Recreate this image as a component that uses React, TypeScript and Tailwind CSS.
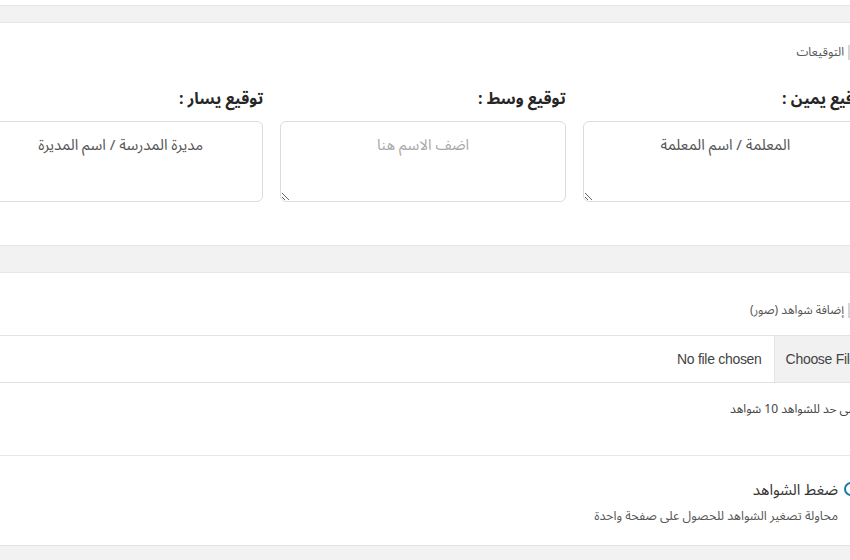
import React from "react";

const arabic = "font-['Noto_Sans_Arabic','DejaVu_Sans',sans-serif]";
const latin = "font-['Liberation_Sans',sans-serif]";

function SignatureField({ label, value, placeholder }: { label: string; value?: string; placeholder?: string }) {
  return (
    <div className="flex flex-col">
      <label className="h-[44px] flex items-center text-[16px] font-bold text-[#262626]">{label}</label>
      <textarea
        defaultValue={value}
        placeholder={placeholder}
        className="h-[81px] w-full resize-y rounded-[6px] border border-[#dcdcdc] px-3 pt-[12px] text-center text-[15px] text-[#555] placeholder:text-[#a9a9a9] outline-none"
      />
    </div>
  );
}

function SectionTitle({ children }: { children: React.ReactNode }) {
  return (
    <div className="flex">
      <span className="mr-[18px] border-r-2 border-[#d6d6d6] pr-[4px] text-[12px] leading-[15px] text-[#555]">{children}</span>
    </div>
  );
}

export default function App() {
  return (
    <div className={`w-[850px] h-[560px] overflow-hidden bg-white ${arabic}`}>
      <div dir="rtl" className="ml-[-37px] w-[920px] pt-[5px]">
        <div className="h-[18px] border-y border-[#e6e6e6] bg-[#f2f2f2]" />

        <section className="bg-white px-[15px] pt-[22px] pb-[43px]">
          <SectionTitle>التوقيعات</SectionTitle>
          <div className="mt-[17px] grid grid-cols-3 gap-[17px]">
            <SignatureField label="توقيع يمين :" value="المعلمة / اسم المعلمة" />
            <SignatureField label="توقيع وسط :" placeholder="اضف الاسم هنا" />
            <SignatureField label="توقيع يسار :" value="مديرة المدرسة / اسم المديرة" />
          </div>
        </section>

        <div className="h-[28px] border-y border-[#e6e6e6] bg-[#f2f2f2]" />

        <section className="bg-white">
          <div className="px-[15px] pt-[30px] pb-[17px]">
            <SectionTitle>إضافة شواهد (صور)</SectionTitle>
          </div>
          <div className="mx-[15px] flex h-[48px] items-stretch border-y border-[#e3e3e3]">
            <button className={`border-l border-[#e3e3e3] bg-[#f1f1f1] px-[11px] text-[14px] tracking-[-0.3px] text-[#444] ${latin}`}>
              Choose File
            </button>
            <span className={`flex items-center pr-[12px] text-[14px] tracking-[-0.3px] text-[#444] ${latin}`}>
              No file chosen
            </span>
          </div>
          <p className="mx-[15px] h-[73px] border-b border-[#e6e6e6] pt-[18px] text-[12px] text-[#444]">
            أقصى حد للشواهد 10 شواهد
          </p>
          <div className="mx-[15px] flex h-[90px] gap-[6px] border-b border-[#e3e3e3] pr-[10px] pt-[24px]">
            <span className="mt-[2px] h-[14px] w-[14px] shrink-0 rounded-full border-[2.5px] border-[#1c7aa8]" />
            <div className="flex flex-col">
              <span className="text-[15px] leading-[20px] text-[#333]">ضغط الشواهد</span>
              <span className="mt-[7px] text-[12.5px] leading-[18px] text-[#555]">محاولة تصغير الشواهد للحصول على صفحة واحدة</span>
            </div>
          </div>
        </section>
        <div className="h-[40px] bg-[#f2f2f2]" />
      </div>
    </div>
  );
}
